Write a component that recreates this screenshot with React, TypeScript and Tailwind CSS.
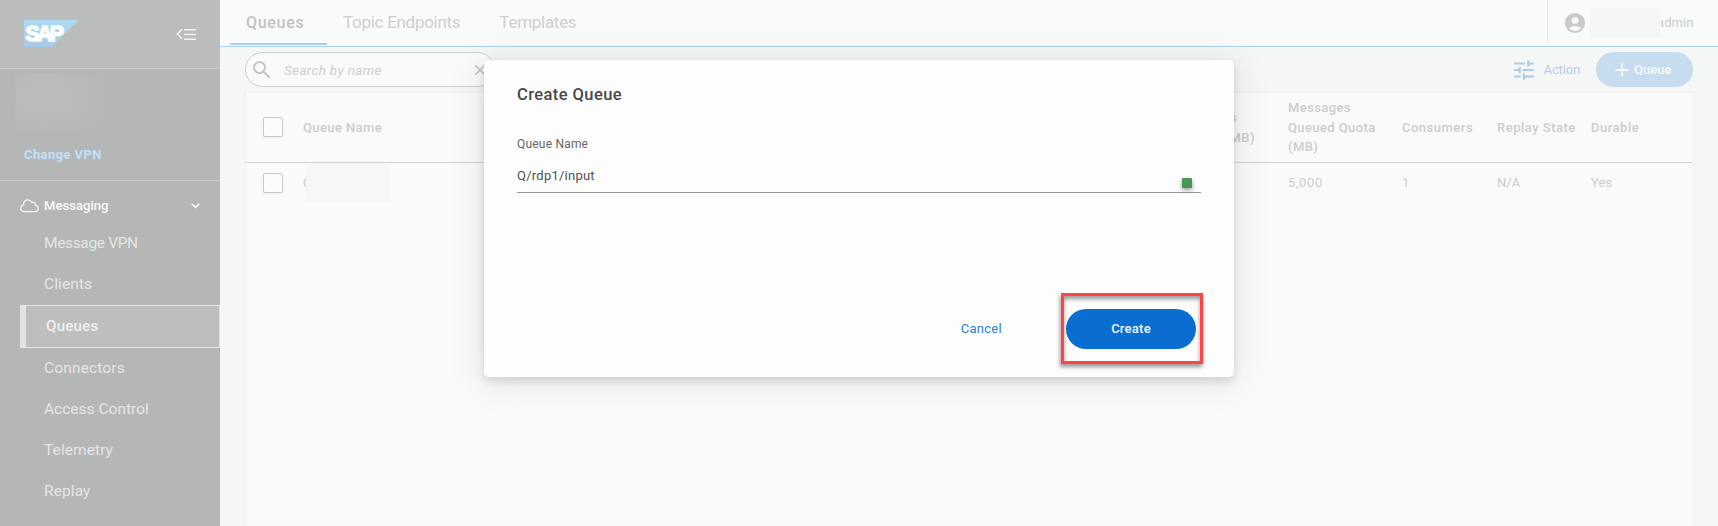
import React from "react";
import { MdAccountCircle, MdAdd, MdClose, MdSearch, MdTune } from "react-icons/md";

const navAbove = [
  { label: "Message VPN", cls: "tracking-[-0.35px]" },
  { label: "Clients", cls: "tracking-[0.1px]" },
];
const navBelow = [
  { label: "Connectors", cls: "tracking-[0.15px]" },
  { label: "Access Control", cls: "tracking-[0.01px]" },
  { label: "Telemetry", cls: "tracking-[0.08px]" },
  { label: "Replay", cls: "tracking-[0.1px]" },
];

function NavItem({ label, cls }: { label: string; cls: string }) {
  return (
    <a className={`flex h-[41px] items-center pl-11 text-[15.5px] text-[#e4e6e5] ${cls}`}>{label}</a>
  );
}

function SapLogo() {
  return (
    <svg width="55" height="27" viewBox="0 0 55 27">
      <defs>
        <linearGradient id="sap" x1="0" y1="0" x2="0" y2="1">
          <stop offset="0" stopColor="#aadcf1" />
          <stop offset="1" stopColor="#a9c9e6" />
        </linearGradient>
      </defs>
      <path d="M0 0H54.5L28 27H0Z" fill="url(#sap)" />
      <text
        x="1.2"
        y="21.3"
        textLength="39"
        lengthAdjust="spacing"
        fill="#fbfcfc"
        stroke="#fbfcfc"
        strokeWidth="1.5"
        fontFamily="Liberation Sans, sans-serif"
        fontWeight="700"
        fontSize="21.5"
      >
        SAP
      </text>
    </svg>
  );
}

function Sidebar() {
  return (
    <aside className="flex h-full w-[220px] shrink-0 flex-col bg-[#b5b7b6]">
      <div className="flex h-[69px] shrink-0 items-start justify-between border-b border-[#cacccb] bg-[#bbbdbc] pl-6 pr-6 pt-5">
        <SapLogo />
        <svg className="mt-2" width="20" height="13" viewBox="0 0 20 13" fill="none" stroke="#f0f2f1">
          <path d="M6 1.5L1.3 6L6 10.8" strokeWidth="1.6" />
          <path d="M8 1.8H20M8 6.5H20M8 11.2H20" strokeWidth="1.6" />
        </svg>
      </div>
      <div className="flex h-28 shrink-0 flex-col border-b border-[#cacccb] pt-1">
        <div className="ml-[15px] h-[61px] w-[90px] bg-[radial-gradient(ellipse_at_35%_40%,#bbbcbb_0%,#b8b9b8_50%,#b5b7b6_85%)]" />
        <a className="mt-[11px] pl-6 text-[13px] font-bold leading-[20px] tracking-[0.4px] text-[#bfe0fa]">Change VPN</a>
      </div>
      <div className="flex h-[42px] shrink-0 items-center pl-5 pr-5 pt-[7px]">
        <svg width="19" height="14" viewBox="0 0 19 14" fill="none" stroke="#f3f5f4" strokeWidth="1.3">
          <path d="M4.2 12.7H15C17 12.7 18.2 11.2 18.2 9.5C18.2 7.6 16.9 6.4 15.4 6.2C15.6 4.6 14.5 3.2 12.6 3.2L11.8 3.3C10.9 1.6 9.6 0.8 7.8 0.8C5.4 0.8 3.6 2.6 3.7 4.9L3.8 5.5C2 6.2 0.8 7.5 0.8 9.3C0.8 11.3 2.3 12.7 4.2 12.7Z" />
        </svg>
        <span className="ml-[5px] grow text-[13px] font-medium tracking-[0.05px] text-[#f8faf9]">Messaging</span>
        <svg width="9" height="6" viewBox="0 0 9 6" fill="none" stroke="#f8faf9" strokeWidth="1.7">
          <path d="M0.8 0.8L4.5 4.4L8.2 0.8" />
        </svg>
      </div>
      <nav className="flex flex-col">
        {navAbove.map((n) => (
          <NavItem key={n.label} {...n} />
        ))}
        <a className="ml-5 flex h-[43px] items-center border border-l-[6px] border-[#e2e4e3] bg-[#bdbfbe] pl-5 text-[15px] font-medium tracking-[0.3px] text-[#eff1f0]">
          Queues
        </a>
        {navBelow.map((n) => (
          <NavItem key={n.label} {...n} />
        ))}
      </nav>
    </aside>
  );
}

function TopBar() {
  return (
    <header className="flex h-[47px] shrink-0 border-b border-[#aed0ee] bg-[#f9fbfa] pl-[10px] text-[17px]">
      <a className="h-[45px] w-[97px] border-b-2 border-[#a9cdee] pl-4 pt-[10px] text-[16px] font-medium leading-[25px] tracking-[0.7px] text-[#c0c2c1]">Queues</a>
      <a className="ml-4 pt-[10px] leading-6 tracking-[-0.28px] text-[#cdcfce]">Topic Endpoints</a>
      <a className="ml-[39px] pt-[10px] leading-6 tracking-[-0.28px] text-[#cdcfce]">Templates</a>
      <div className="ml-auto flex h-11 w-[171px] border-l border-[#eceeed] pl-[15px]">
        <MdAccountCircle className="mt-[11px] size-6 shrink-0" color="#c9cbca" />
        <div className="relative z-10 ml-[3px] mt-2 h-[30px] w-[71px] shrink-0 bg-[#f5f6f6]" />
        <span className="ml-[-4px] pt-[13px] text-[13px] leading-5 tracking-[0.1px] text-[#cbcdcc]">admin</span>
      </div>
    </header>
  );
}

function Toolbar() {
  return (
    <div className="flex h-[45px] shrink-0 items-start pl-[25px] pr-[25px] pt-[5px]">
      <div className="flex h-[35px] w-[250px] items-center rounded-full border border-[#cfd1d0] bg-[#f9fbfa] pl-[4px] pr-2">
        <MdSearch className="mt-px size-6" color="#c4c6c5" />
        <span className="ml-[10px] mt-px grow text-[13.5px] italic tracking-[0.33px] text-[#cccecd]">Search by name</span>
        <MdClose className="mr-[-3px] size-[18px]" color="#c2c4c3" />
      </div>
      <div className="ml-auto flex h-[35px] items-center">
        <MdTune className="size-[26px]" color="#b0cbe8" />
        <span className="ml-[7px] text-[13px] tracking-[-0.15px] text-[#b3cdea]">Action</span>
      </div>
      <button className="ml-4 flex h-[35px] w-[97px] items-center rounded-full bg-[#c8dcef] pl-[15px] text-[13px] font-medium text-[#f5f9fc]">
        <MdAdd className="size-[22px]" />
        <span className="ml-px tracking-[0.05px]">Queue</span>
      </button>
    </div>
  );
}

function Box() {
  return <span className="block size-5 rounded-[2px] border border-[#c9cbca] bg-[#fafcfb] shadow-[0_1px_2px_rgba(0,0,0,0.08)]" />;
}

const grid = "grid grid-cols-[57px_871px_114px_114px_95px_94px_1fr] items-center";

function Table() {
  return (
    <section className="mx-[25px] flex grow flex-col border border-b-0 border-[#eff1f0] bg-[#f9fbfa] text-[13px] text-[#cbcdcc]">
      <div className={`${grid} h-[70px] shrink-0 border-b border-[#cfd1d0] font-medium leading-[19.5px] tracking-[0.4px]`}>
        <div className="pb-px pl-[17px]"><Box /></div>
        <div>Queue Name</div>
        <div>Messages<br />Queued (MB)</div>
        <div>Messages<br />Queued Quota<br />(MB)</div>
        <div className="tracking-[0.5px]">Consumers</div>
        <div className="tracking-[0.5px]">Replay State</div>
        <div className="tracking-[0.5px]">Durable</div>
      </div>
      <div className={`${grid} h-10 shrink-0 tracking-[0.15px]`}>
        <div className="pl-[17px]"><Box /></div>
        <div className="flex items-center">
          <span>Q</span>
          <span className="relative z-10 ml-[-6px] h-[38px] w-[84px] bg-[#f6f8f7]" />
        </div>
        <div />
        <div className="tracking-[0.6px]">5,000</div>
        <div>1</div>
        <div className="tracking-[0]">N/A</div>
        <div>Yes</div>
      </div>
    </section>
  );
}

function CreateDialog() {
  return (
    <div
      role="dialog"
      className="absolute left-[484px] top-[60px] z-20 flex h-[317px] w-[750px] flex-col rounded-[5px] bg-[#fdfdfd] px-[33px] shadow-[0_4px_10px_rgba(0,0,0,0.13),0_4px_36px_4px_rgba(0,0,0,0.08)]"
    >
      <h2 className="mt-[23px] text-[16.5px] font-medium leading-6 tracking-[0.42px] text-[#484848]">Create Queue</h2>
      <label className="mt-[27px] text-[12px] leading-5 tracking-[0.2px] text-[#666]">Queue Name</label>
      <div className="flex h-[39px] border-b border-[#999]">
        <span className="grow pt-3 text-[13px] leading-5 tracking-[0.24px] text-[#505050]">Q/rdp1/input</span>
        <span className="mr-[9px] mt-6 size-[10px] rounded-[1px] bg-[#479657] shadow-[0_2px_4px_rgba(0,0,0,0.4)]" />
      </div>
      <div className="mt-[116px] flex h-10 items-center justify-end pr-[5px] text-[13px]">
        <button className="mr-[64px] tracking-[0.3px] text-[#2b80d4]">Cancel</button>
        <button className="h-10 w-[130px] rounded-full bg-[#0a6ed1] font-medium tracking-[0.25px] text-[#f2f8fe]">Create</button>
      </div>
      <div className="pointer-events-none absolute left-[577px] top-[233px] h-[71px] w-[142px] border-[3px] border-[#ff4444] shadow-[-1px_3px_4px_rgba(0,0,0,0.4),inset_0_3px_4px_rgba(0,0,0,0.4)]" />
    </div>
  );
}

export default function App() {
  return (
    <div className="relative flex h-[526px] w-[1718px] overflow-hidden bg-[#f5f7f6] font-[Roboto,sans-serif]">
      <Sidebar />
      <main className="flex min-w-0 grow flex-col">
        <TopBar />
        <Toolbar />
        <Table />
      </main>
      <CreateDialog />
    </div>
  );
}
